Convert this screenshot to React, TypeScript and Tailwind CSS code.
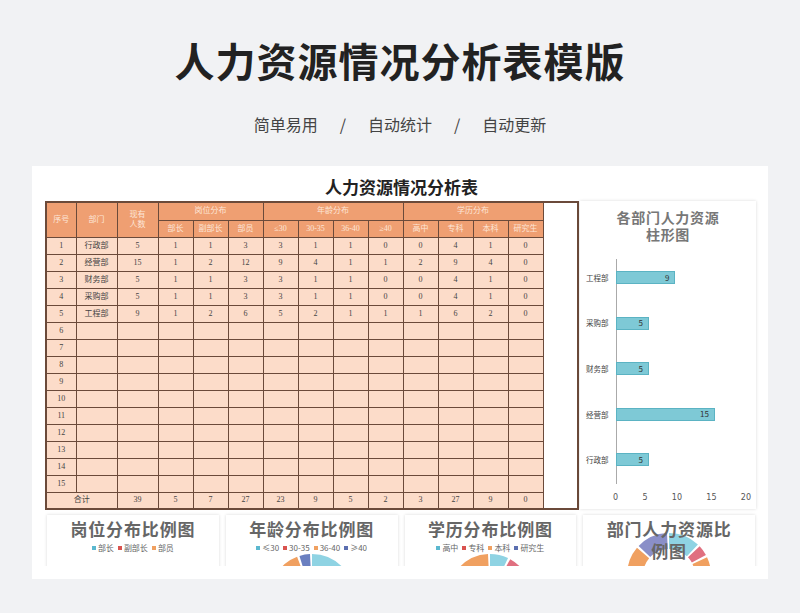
const rows = [
  ["1","行政部","5","1","1","3","3","1","1","0","0","4","1","0"],
  ["2","经营部","15","1","2","12","9","4","1","1","2","9","4","0"],
  ["3","财务部","5","1","1","3","3","1","1","0","0","4","1","0"],
  ["4","采购部","5","1","1","3","3","1","1","0","0","4","1","0"],
  ["5","工程部","9","1","2","6","5","2","1","1","1","6","2","0"],
];
const total = ["39","5","7","27","23","9","5","2","3","27","9","0"];
const bars = [["工程部",9],["采购部",5],["财务部",5],["经营部",15],["行政部",5]] as const;
const cjk = { fontFamily: '"Noto Sans CJK SC", sans-serif' };
const serif = { fontFamily: '"Liberation Serif", "Noto Sans CJK SC", serif' };
const td = "border border-[#6b4a3a] text-center text-[8px] text-[#444] h-[17px] p-0";
const th = "border border-[#6b4a3a] text-center text-[8px] text-[#fde6d8] font-normal p-0 bg-[#ef9f72]";

function Donut({ segs }: { segs: [number, string][] }) {
  let acc = 0;
  const r = 34, c = 2 * Math.PI * r;
  return (
    <svg width="100" height="100" viewBox="0 0 100 100">
      {segs.map(([p, col], i) => {
        const el = <circle key={i} cx="50" cy="50" r={r} fill="none" stroke={col} strokeWidth="16" strokeDasharray={`${p * c - 2} ${c}`} strokeDashoffset={-acc * c} transform="rotate(-90 50 50)" />;
        acc += p;
        return el;
      })}
    </svg>
  );
}

function Panel({ title, legend, segs }: { title: React.ReactNode; legend: [string, string][]; segs?: [number, string][] }) {
  return (
    <div className="bg-white shadow-[0_0_3px_rgba(0,0,0,0.15)] flex flex-col items-center overflow-hidden h-[60px] pt-[3px] relative">
      <div className="text-[17px] text-[#666] font-bold leading-[22px] tracking-wider text-center relative z-10" style={cjk}>{title}</div>
      {legend.length > 0 && (
        <div className="flex gap-1 text-[8px] text-[#666] mt-[2px] relative z-10" style={cjk}>
          {legend.map(([l, col]) => (
            <span key={l} className="flex items-center gap-[2px]"><span className="w-[4px] h-[4px]" style={{ background: col }} />{l}</span>
          ))}
        </div>
      )}
      {segs && <div className={legend.length ? "-mt-[8px]" : "absolute top-[10px]"}><Donut segs={segs} /></div>}
    </div>
  );
}

export default function App() {
  return (
    <div className="w-[800px] h-[613px] bg-[#f1f2f4] overflow-hidden flex flex-col items-center" style={cjk}>
      <h1 className="text-[40px] font-bold text-[#222] mt-[34px] leading-[52px] tracking-[1px]">人力资源情况分析表模版</h1>
      <div className="flex gap-[22px] text-[16px] text-[#444] mt-[28px] leading-[20px]">
        <span>简单易用</span><span>/</span><span>自动统计</span><span>/</span><span>自动更新</span>
      </div>
      <div className="mt-[32px] w-[736px] h-[413px] bg-white relative overflow-hidden">
        <div className="flex pl-[13px] pt-[9px] gap-[2px]">
          <div className="w-[533px]">
            <div className="text-[17px] font-bold text-[#222] text-center leading-[24px] ml-[180px] mb-[2px]" style={cjk}>人力资源情况分析表</div>
            <table className="border-collapse w-[533px] table-fixed border-2 border-[#6b4a3a]" style={serif}>
              <colgroup>
                <col style={{ width: 30 }} /><col style={{ width: 41 }} /><col style={{ width: 41 }} />
                {Array.from({ length: 12 }).map((_, i) => <col key={i} style={{ width: 35 }} />)}
              </colgroup>
              <thead>
                <tr className="h-[18px]">
                  <th rowSpan={2} className={th}>序号</th>
                  <th rowSpan={2} className={th}>部门</th>
                  <th rowSpan={2} className={th + " leading-[10px]"}>现有<br />人数</th>
                  <th colSpan={3} className={th}>岗位分布</th>
                  <th colSpan={4} className={th}>年龄分布</th>
                  <th colSpan={4} className={th}>学历分布</th>
                </tr>
                <tr className="h-[17px]">
                  {["部长","副部长","部员","≤30","30-35","36-40","≥40","高中","专科","本科","研究生"].map(h => <th key={h} className={th}>{h}</th>)}
                </tr>
              </thead>
              <tbody className="bg-[#fcdcc9]">
                {rows.map(r => <tr key={r[0]}>{r.map((c, i) => <td key={i} className={td}>{c}</td>)}</tr>)}
                {Array.from({ length: 10 }).map((_, k) => (
                  <tr key={k}><td className={td}>{k + 6}</td>{Array.from({ length: 13 }).map((_, i) => <td key={i} className={td}></td>)}</tr>
                ))}
                <tr><td colSpan={2} className={td}>合计</td>{total.map((c, i) => <td key={i} className={td}>{c}</td>)}</tr>
              </tbody>
            </table>
          </div>
          <div className="w-[176px] mt-[26px] h-[308px] bg-white shadow-[0_0_3px_rgba(0,0,0,0.15)] flex flex-col items-center">
            <div className="text-[14px] font-bold text-[#777] text-center leading-[17px] mt-[8px] tracking-wider">各部门人力资源<br />柱形图</div>
            <div className="relative w-full flex-1">
              <div className="absolute left-[36px] top-[16px] h-[225px] w-px bg-[#aaa]" />
              {bars.map(([n, v], i) => (
                <div key={n} className="absolute left-0 flex items-center" style={{ top: 28 + i * 45.6 }}>
                  <span className="w-[36px] text-[7.5px] text-[#444] pl-[6px]">{n}</span>
                  <div className="h-[13px] bg-[#7ec9d6] border border-[#5bb3c3] flex items-center justify-end pr-[5px] text-[8px] text-[#333]" style={{ width: v * 6.6 }}>{v}</div>
                </div>
              ))}
              <div className="absolute top-[249px] left-[33px] w-[138px] flex justify-between text-[8px] text-[#555]" style={{ fontFamily: '"DejaVu Sans", sans-serif' }}>
                {["0","5","10","15","20"].map(t => <span key={t}>{t}</span>)}
              </div>
            </div>
          </div>
        </div>
        <div className="grid grid-cols-4 gap-[7px] pl-[15px] pr-[13px] mt-[5px]">
          <Panel title="岗位分布比例图" legend={[["部长","#5bb8cf"],["副部长","#d9534f"],["部员","#f0a060"]]} />
          <Panel title="年龄分布比例图" legend={[["≤30","#5bb8cf"],["30-35","#d9534f"],["36-40","#f0a060"],["≥40","#5b6fb0"]]} segs={[[0.59,"#8fd3e3"],[0.23,"#f0a060"],[0.13,"#f0a060"],[0.05,"#6a7fc0"]]} />
          <Panel title="学历分布比例图" legend={[["高中","#5bb8cf"],["专科","#d9534f"],["本科","#f0a060"],["研究生","#5b6fb0"]]} segs={[[0.08,"#8fd3e3"],[0.1,"#e07080"],[0.5,"#f0a060"],[0.32,"#f0a060"]]} />
          <Panel title={<>部门人力资源比<br />例图</>} legend={[]} segs={[[0.13,"#8fd3e3"],[0.05,"#e07080"],[0.69,"#f0a060"],[0.13,"#8a8fc8"]]} />
        </div>
        <div className="absolute left-0 right-0 bottom-0 h-[13px] bg-white" />
      </div>
    </div>
  );
}
